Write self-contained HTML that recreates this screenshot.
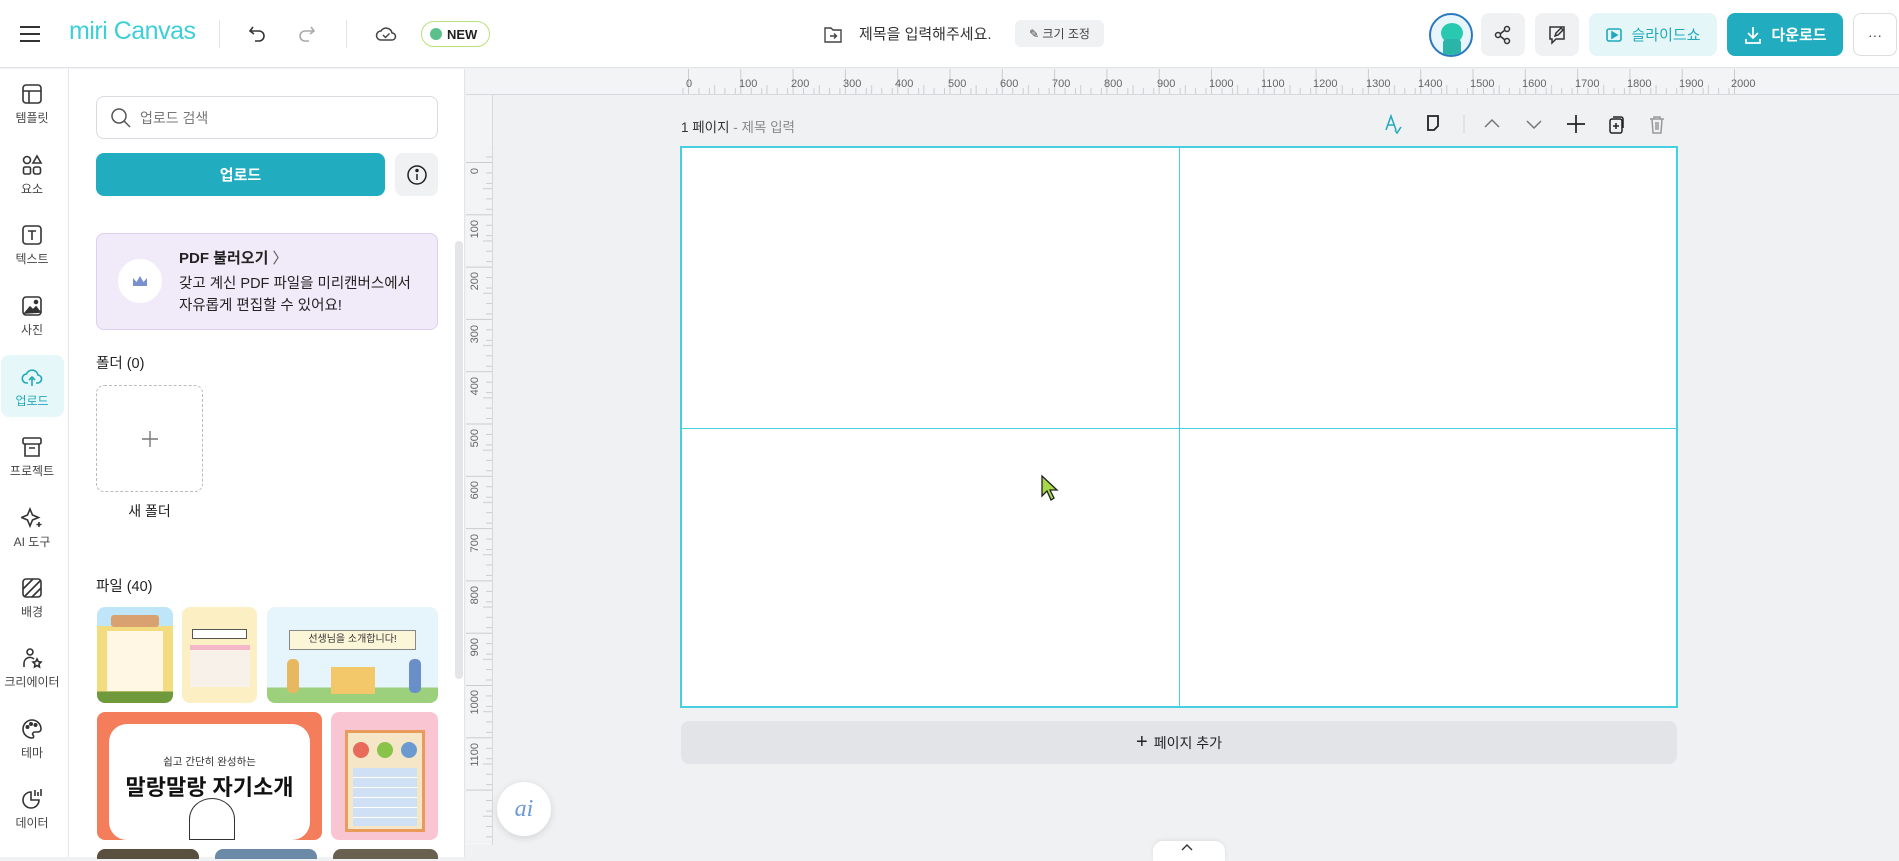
<!DOCTYPE html>
<html><head><meta charset="utf-8">
<style>
*{margin:0;padding:0;box-sizing:border-box}
body{width:1899px;height:857px;overflow:hidden;background:#f0f1f3;font-family:"Liberation Sans","Noto Sans CJK KR",sans-serif;color:#222;position:relative}
.a{position:absolute}
.top{left:0;top:0;width:1899px;height:68px;background:#fff;border-bottom:1px solid #e3e4e8}
.rail{left:0;top:69px;width:69px;height:788px;background:#fff;border-right:1px solid #e6e7ea}
.panel{left:69px;top:69px;width:396px;height:788px;background:#fff;border-right:1px solid #e3e4e8}
.ri{position:absolute;left:0;width:64px;text-align:center;font-size:12px;color:#444}
.ri svg{display:block;margin:0 auto 4px}
.btn{position:absolute;border-radius:8px;display:flex;align-items:center;justify-content:center}
</style></head><body>

<div class="a top"></div>
<svg class="a" style="left:19px;top:24px" width="22" height="20"><g stroke="#333" stroke-width="2"><line x1="1" y1="3" x2="21" y2="3"/><line x1="1" y1="10" x2="21" y2="10"/><line x1="1" y1="17" x2="21" y2="17"/></g></svg>
<div class="a" style="left:69px;top:17px;font-size:25px;color:#3ccfd8;letter-spacing:-0.5px;font-family:'Liberation Sans',sans-serif">miri Canvas</div>
<div class="a" style="left:219px;top:20px;width:1px;height:28px;background:#e3e4e8"></div>
<svg class="a" style="left:248px;top:24px" width="20" height="20" fill="none" stroke="#333" stroke-width="1.6"><path d="M5 3 L2 7 L6 10"/><path d="M2 7 H11 a5 5 0 0 1 0 10 H7"/></svg>
<svg class="a" style="left:296px;top:24px" width="20" height="20" fill="none" stroke="#aaa" stroke-width="1.6"><path d="M15 3 L18 7 L14 10"/><path d="M18 7 H9 a5 5 0 0 0 0 10 H13"/></svg>
<div class="a" style="left:346px;top:20px;width:1px;height:28px;background:#e3e4e8"></div>
<svg class="a" style="left:375px;top:25px" width="22" height="18" fill="none" stroke="#444" stroke-width="1.5"><path d="M6 15 a4.5 4.5 0 0 1 0-9 a6 6 0 0 1 11 2 a3.5 3.5 0 0 1 0 7z"/><path d="M8 10 l2.5 2.5 l4-4"/></svg>
<div class="a" style="left:421px;top:21px;width:69px;height:26px;border:1.5px solid #b8e27a;border-radius:14px;font-size:13px;font-weight:bold;display:flex;align-items:center;padding-left:8px"><span style="display:inline-block;width:12px;height:12px;border-radius:50%;background:#5cc08c;margin-right:5px"></span>NEW</div>

<svg class="a" style="left:823px;top:24px" width="20" height="20" fill="none" stroke="#444" stroke-width="1.4"><path d="M2 4 h6 l2 2 h8 v12 h-16z"/><path d="M7 12 h6 M11 9.5 l2.5 2.5 l-2.5 2.5"/></svg>
<div class="a" style="left:859px;top:23px;font-size:15px;color:#333">제목을 입력해주세요.</div>
<div class="a btn" style="left:1015px;top:20px;width:89px;height:27px;background:#f0f1f3;font-size:12px;color:#444;border-radius:6px">✎ 크기 조정</div>

<div class="a" style="left:1429px;top:13px;width:44px;height:44px;border-radius:50%;border:2px solid #2a78c0;background:#e8f6fb;overflow:hidden"><div class="a" style="left:10px;top:8px;width:22px;height:20px;border-radius:50%;background:#28c9b0"></div><div class="a" style="left:12px;top:24px;width:18px;height:20px;background:#2ab5a8;border-radius:4px"></div></div>
<div class="btn" style="left:1481px;top:13px;width:44px;height:43px;background:#f0f1f3"><svg width="20" height="20" fill="none" stroke="#333" stroke-width="1.5"><circle cx="5" cy="10" r="2.5"/><circle cx="14" cy="4" r="2.5"/><circle cx="14" cy="16" r="2.5"/><path d="M7 9 l5-4 M7 11 l5 4"/></svg></div>
<div class="btn" style="left:1535px;top:13px;width:44px;height:43px;background:#f0f1f3"><svg width="22" height="22" fill="none" stroke="#333" stroke-width="1.5"><path d="M4 3 h14 v12 h-8 l-4 4 v-4 h-2z"/><path d="M9 12 l1-3 l5-5 l2 2 l-5 5z"/></svg></div>
<div class="btn" style="left:1589px;top:13px;width:128px;height:43px;background:#e4f6f8;color:#21a9bb;font-size:15px"><svg width="18" height="18" fill="none" stroke="#21a9bb" stroke-width="1.6" style="margin-right:8px"><rect x="2" y="3" width="14" height="12" rx="2"/><path d="M7 6 l5 3 l-5 3z" fill="#21a9bb"/></svg>슬라이드쇼</div>
<div class="btn" style="left:1727px;top:13px;width:116px;height:43px;background:#21adbf;color:#fff;font-size:15px;font-weight:bold"><svg width="20" height="20" fill="none" stroke="#fff" stroke-width="1.7" style="margin-right:8px"><path d="M10 2 v11 M5 8 l5 5 l5-5 M3 14 v4 h14 v-4"/></svg>다운로드</div>
<div class="btn" style="left:1853px;top:13px;width:44px;height:43px;border:1px solid #ddd;background:#fff;font-size:14px;color:#444">···</div>

<div class="a rail">
 <div class="a" style="left:1px;top:286px;width:63px;height:62px;background:#e6f7f9;border-radius:8px"></div>
 <div class="ri" style="top:14px"><svg width="22" height="22" fill="none" stroke="#333" stroke-width="1.6"><rect x="2" y="2" width="18" height="18" rx="3"/><path d="M2 8 h18 M8 8 v12"/></svg>템플릿</div>
 <div class="ri" style="top:85px"><svg width="22" height="22" fill="none" stroke="#333" stroke-width="1.6"><circle cx="6" cy="6" r="3.5"/><path d="M16 2 l4 7 h-8z"/><rect x="2.5" y="13" width="7" height="7" rx="1.5"/><rect x="12.5" y="13" width="7" height="7" rx="2"/></svg>요소</div>
 <div class="ri" style="top:155px"><svg width="22" height="22" fill="none" stroke="#333" stroke-width="1.6"><rect x="2" y="2" width="18" height="18" rx="3"/><path d="M7 7 h8 M11 7 v9"/></svg>텍스트</div>
 <div class="ri" style="top:226px"><svg width="22" height="22" fill="none" stroke="#333" stroke-width="1.6"><rect x="2" y="2" width="18" height="18" rx="3"/><path d="M4 18 l5-6 l3 3 l3-3 l4 5z" fill="#333"/><circle cx="15" cy="7" r="1.5" fill="#333"/></svg>사진</div>
 <div class="ri" style="top:297px;color:#21a9bb"><svg width="22" height="22" fill="none" stroke="#21a9bb" stroke-width="1.6"><path d="M7 17 h-1 a4.5 4.5 0 0 1-0.5-9 a6 6 0 0 1 11.5 1 a4 4 0 0 1 -1 8 h-1"/><path d="M11 20 v-9 M8 14 l3-3 l3 3"/></svg>업로드</div>
 <div class="ri" style="top:367px"><svg width="22" height="22" fill="none" stroke="#333" stroke-width="1.6"><rect x="2" y="2" width="18" height="6" rx="1.5"/><path d="M4 8 v12 h14 v-12 M8 12 h6"/></svg>프로젝트</div>
 <div class="ri" style="top:438px"><svg width="22" height="22" fill="none" stroke="#333" stroke-width="1.6"><path d="M9 2 l2.5 6 l6 2.5 l-6 2.5 l-2.5 6 l-2.5-6 l-6-2.5 l6-2.5z"/><path d="M18 15 v5 M15.5 17.5 h5"/></svg>AI 도구</div>
 <div class="ri" style="top:508px"><svg width="22" height="22" fill="none" stroke="#333" stroke-width="1.6"><rect x="2" y="2" width="18" height="18" rx="3"/><path d="M2 12 l10-10 M4 19 l15-15 M11 20 l9-9"/></svg>배경</div>
 <div class="ri" style="top:578px"><svg width="22" height="22" fill="none" stroke="#333" stroke-width="1.6"><circle cx="9" cy="5" r="3"/><path d="M3 20 v-3 a6 6 0 0 1 10-5"/><path d="M16 12 l1.3 2.7 l2.7.4 l-2 2 l.5 2.9 l-2.5-1.4 l-2.5 1.4 l.5-2.9 l-2-2 l2.7-.4z"/></svg>크리에이터</div>
 <div class="ri" style="top:649px"><svg width="22" height="22" fill="none" stroke="#333" stroke-width="1.6"><path d="M11 2 a9 9 0 0 0 0 18 c2 0 2-2 1-3 c-1-1 0-3 2-3 h3 a3 3 0 0 0 3-3 a9 9 0 0 0 -9-9z"/><circle cx="6.5" cy="9" r="1.2" fill="#333"/><circle cx="10" cy="6" r="1.2" fill="#333"/><circle cx="14.5" cy="7" r="1.2" fill="#333"/></svg>테마</div>
 <div class="ri" style="top:719px"><svg width="22" height="22" fill="none" stroke="#333" stroke-width="1.6"><path d="M10 4 a8 8 0 1 0 8 8 h-8z"/><path d="M14 2 v6 M17 4 v4 M20 1 v7"/></svg>데이터</div>
</div>

<div class="a panel">
 <div class="a" style="left:27px;top:27px;width:342px;height:43px;border:1px solid #d9dbe0;border-radius:8px"></div>
 <svg class="a" style="left:41px;top:38px" width="22" height="22" fill="none" stroke="#555" stroke-width="1.5"><circle cx="9" cy="9" r="7"/><path d="M14 14 l6 6"/></svg>
 <div class="a" style="left:71px;top:39px;font-size:14px;color:#777">업로드 검색</div>
 <div class="btn" style="left:27px;top:84px;width:289px;height:43px;background:#21adbf;color:#fff;font-size:15px;font-weight:bold">업로드</div>
 <div class="btn" style="left:326px;top:84px;width:43px;height:43px;background:#f0f1f3"><svg width="22" height="22" fill="none" stroke="#222" stroke-width="1.5"><circle cx="11" cy="11" r="9"/><path d="M11 10 v6"/><circle cx="11" cy="6.5" r="1" fill="#222"/></svg></div>
 <div class="a" style="left:27px;top:164px;width:342px;height:97px;background:#f1eaf9;border:1px solid #dccff0;border-radius:8px"></div>
 <div class="a" style="left:49px;top:190px;width:44px;height:44px;border-radius:50%;background:#fff;display:flex;align-items:center;justify-content:center"><svg width="16" height="12"><path d="M1 3 l3.5 4 l3.5-6 l3.5 6 l3.5-4 v8 h-14z" fill="#7a8fd0"/></svg></div>
 <div class="a" style="left:110px;top:178px;font-size:15px;font-weight:bold;color:#222">PDF 불러오기 <span style="font-weight:normal;color:#555">〉</span></div>
 <div class="a" style="left:110px;top:204px;font-size:14.5px;line-height:22px;color:#222">갖고 계신 PDF 파일을 미리캔버스에서<br>자유롭게 편집할 수 있어요!</div>
 <div class="a" style="left:27px;top:283px;font-size:14.5px;color:#222">폴더 (0)</div>
 <div class="a" style="left:27px;top:316px;width:107px;height:107px;border:1px dashed #bbb;border-radius:8px"></div>
 <svg class="a" style="left:72px;top:361px" width="18" height="18" stroke="#777" stroke-width="1.4"><path d="M9 1 v16 M1 9 h16"/></svg>
 <div class="a" style="left:27px;top:432px;width:107px;text-align:center;font-size:14px;color:#222">새 폴더</div>
 <div class="a" style="left:27px;top:506px;font-size:14.5px;color:#222">파일 (40)</div>
 <div class="a" style="left:386px;top:172px;width:8px;height:438px;background:#e4e5e8;border-radius:4px"></div>

 <div class="a" style="left:28px;top:538px;width:76px;height:96px;border-radius:8px;background:linear-gradient(#bfe6f8 0 20%,#f3dc7f 20% 88%,#6f9a3c 88%);overflow:hidden"><div class="a" style="left:10px;top:24px;width:56px;height:60px;background:#fff7e3"></div><div class="a" style="left:14px;top:8px;width:48px;height:12px;background:#d9a070;border-radius:3px"></div></div>
 <div class="a" style="left:113px;top:538px;width:75px;height:96px;border-radius:8px;background:#fcefc4;overflow:hidden"><div class="a" style="left:10px;top:22px;width:55px;height:10px;border:1px solid #555;background:#fff"></div><div class="a" style="left:8px;top:38px;width:60px;height:42px;background:#f7f1ea;border-top:5px solid #f5b8c8"></div></div>
 <div class="a" style="left:198px;top:538px;width:171px;height:96px;border-radius:8px;background:linear-gradient(#e6f4fb 0 84%,#9dd07c 84%);overflow:hidden"><div class="a" style="left:22px;top:23px;width:127px;height:20px;background:#fcf6d8;border:1.5px solid #888;font-size:10px;text-align:center;line-height:17px;color:#333">선생님을 소개합니다!</div><div class="a" style="left:64px;top:60px;width:44px;height:27px;background:#f3c86a"></div><div class="a" style="left:20px;top:52px;width:12px;height:34px;background:#e8b860;border-radius:5px"></div><div class="a" style="left:142px;top:52px;width:12px;height:34px;background:#6a8fc8;border-radius:5px"></div></div>
 <div class="a" style="left:28px;top:643px;width:225px;height:128px;border-radius:8px;background:#f47e5c;overflow:hidden"><div class="a" style="left:12px;top:12px;width:201px;height:116px;background:#fff;border-radius:18px"></div><div class="a" style="left:0;top:42px;width:225px;text-align:center;font-size:10.5px;color:#333">쉽고 간단히 완성하는</div><div class="a" style="left:0;top:58px;width:225px;text-align:center;font-size:22px;font-weight:bold;color:#111">말랑말랑 자기소개</div><div class="a" style="left:92px;top:86px;width:46px;height:42px;border-radius:50% 50% 0 0;border:1.5px solid #333;background:#fff"></div></div>
 <div class="a" style="left:262px;top:643px;width:107px;height:128px;border-radius:8px;background:#f9c5d2;overflow:hidden"><div class="a" style="left:14px;top:18px;width:80px;height:102px;background:#f5e6c8;border:3px solid #e99b5c"></div><div class="a" style="left:22px;top:56px;width:64px;height:58px;background:repeating-linear-gradient(#cfe0f4 0 9px,#fff 9px 10px)"></div><div class="a" style="left:22px;top:30px;width:16px;height:16px;border-radius:50%;background:#e86a5a"></div><div class="a" style="left:46px;top:30px;width:16px;height:16px;border-radius:50%;background:#8ac34a"></div><div class="a" style="left:70px;top:30px;width:16px;height:16px;border-radius:50%;background:#6a9ad0"></div></div>
 <div class="a" style="left:28px;top:780px;width:102px;height:10px;border-radius:8px 8px 0 0;background:#5a5040"></div>
 <div class="a" style="left:146px;top:780px;width:102px;height:10px;border-radius:8px 8px 0 0;background:#6a8aa8"></div>
 <div class="a" style="left:264px;top:780px;width:105px;height:10px;border-radius:8px 8px 0 0;background:#6a6050"></div>
</div>

<svg class="a" style="left:0;top:0" width="1899" height="857">
 <defs>
  <pattern id="hx" x="688" y="0" width="52.3" height="94" patternUnits="userSpaceOnUse">
   <line x1="0.5" y1="69" x2="0.5" y2="94" stroke="#ccc"/>
   <line x1="10.96" y1="88" x2="10.96" y2="94" stroke="#ccc"/><line x1="21.42" y1="88" x2="21.42" y2="94" stroke="#ccc"/><line x1="26.65" y1="85" x2="26.65" y2="94" stroke="#ccc"/><line x1="36.9" y1="88" x2="36.9" y2="94" stroke="#ccc"/><line x1="47.3" y1="88" x2="47.3" y2="94" stroke="#ccc"/>
  </pattern>
  <pattern id="vy" x="0" y="162" width="492" height="52.3" patternUnits="userSpaceOnUse">
   <line x1="465" y1="0.5" x2="492" y2="0.5" stroke="#ccc"/>
   <line x1="486" y1="10.96" x2="492" y2="10.96" stroke="#ccc"/><line x1="486" y1="21.42" x2="492" y2="21.42" stroke="#ccc"/><line x1="483" y1="26.65" x2="492" y2="26.65" stroke="#ccc"/><line x1="486" y1="36.9" x2="492" y2="36.9" stroke="#ccc"/><line x1="486" y1="47.3" x2="492" y2="47.3" stroke="#ccc"/>
  </pattern>
 </defs>
 <rect x="466" y="69" width="1433" height="25" fill="#f3f4f6"/>
 <rect x="677" y="69" width="1064" height="25" fill="url(#hx)"/>
 <line x1="466" y1="94.5" x2="1899" y2="94.5" stroke="#d6d8dc"/>
 <rect x="466" y="95" width="26" height="750" fill="#f3f4f6"/>
 <rect x="466" y="147" width="26" height="695" fill="url(#vy)"/>
 <line x1="492.5" y1="95" x2="492.5" y2="845" stroke="#d6d8dc"/>
 <g font-size="11" fill="#666" font-family="Liberation Sans,sans-serif">
  <text x="686" y="87">0</text><text x="739" y="87">100</text><text x="791" y="87">200</text><text x="843" y="87">300</text><text x="895" y="87">400</text><text x="948" y="87">500</text><text x="1000" y="87">600</text><text x="1052" y="87">700</text><text x="1104" y="87">800</text><text x="1157" y="87">900</text><text x="1209" y="87">1000</text><text x="1261" y="87">1100</text><text x="1313" y="87">1200</text><text x="1366" y="87">1300</text><text x="1418" y="87">1400</text><text x="1470" y="87">1500</text><text x="1522" y="87">1600</text><text x="1575" y="87">1700</text><text x="1627" y="87">1800</text><text x="1679" y="87">1900</text><text x="1731" y="87">2000</text>
 </g>
 <g font-size="11" fill="#666" font-family="Liberation Sans,sans-serif">
  <text transform="translate(478,168) rotate(-90)" text-anchor="end">0</text>
  <text transform="translate(478,220) rotate(-90)" text-anchor="end">100</text>
  <text transform="translate(478,272) rotate(-90)" text-anchor="end">200</text>
  <text transform="translate(478,325) rotate(-90)" text-anchor="end">300</text>
  <text transform="translate(478,377) rotate(-90)" text-anchor="end">400</text>
  <text transform="translate(478,429) rotate(-90)" text-anchor="end">500</text>
  <text transform="translate(478,481) rotate(-90)" text-anchor="end">600</text>
  <text transform="translate(478,534) rotate(-90)" text-anchor="end">700</text>
  <text transform="translate(478,586) rotate(-90)" text-anchor="end">800</text>
  <text transform="translate(478,638) rotate(-90)" text-anchor="end">900</text>
  <text transform="translate(478,690) rotate(-90)" text-anchor="end">1000</text>
  <text transform="translate(478,743) rotate(-90)" text-anchor="end">1100</text>
 </g>
</svg>

<div class="a" style="left:681px;top:116px;font-size:13.5px;color:#333">1 페이지 <span style="color:#888">- 제목 입력</span></div>
<svg class="a" style="left:1382px;top:112px" width="300" height="24" fill="none" stroke-width="1.5">
 <path d="M4 18 L9 4 L14 18 M6 13 h6" stroke="#21a9bb"/><path d="M13 18 l2 3 l4-6" stroke="#21a9bb"/>
 <path d="M46 4 h10 v10 l-4 4 h-6z" stroke="#222" stroke-width="1.8"/>
 <line x1="82" y1="3" x2="82" y2="21" stroke="#ddd"/>
 <path d="M103 15 l7-7 l7 7" stroke="#777"/><path d="M145 9 l7 7 l7-7" stroke="#777"/>
 <path d="M194 3 v18 M185 12 h18" stroke="#222" stroke-width="1.7"/>
 <rect x="228" y="7" width="12" height="14" rx="2" stroke="#222"/><path d="M231 5 h8 a2 2 0 0 1 2 2 v9" stroke="#222"/><path d="M234 11 v6 M231 14 h6" stroke="#222"/>
 <path d="M268 7 h14 M272 7 v-2 h6 v2 M270 7 l1 14 h8 l1-14 M274 10 v8 M276 10 v8" stroke="#999"/>
</svg>
<div class="a" style="left:680px;top:146px;width:998px;height:562px;background:#fff;border:2px solid #45cfe0"></div>
<div class="a" style="left:1179px;top:148px;width:1px;height:558px;background:#45cfe0"></div>
<div class="a" style="left:682px;top:428px;width:994px;height:1px;background:#45cfe0"></div>
<div class="btn" style="left:681px;top:721px;width:996px;height:43px;background:#e3e4e7;font-size:14px;color:#222"><span style="font-size:20px;margin-right:6px">+</span>페이지 추가</div>

<svg class="a" style="left:1040px;top:474px" width="24" height="30"><path d="M2 2 L2 22 L7 17 L11 26 L14 24 L10 16 L17 16 Z" fill="#a6d84a" stroke="#222" stroke-width="1.3"/></svg>

<div class="a" style="left:497px;top:782px;width:54px;height:54px;border-radius:50%;background:#fff;box-shadow:0 2px 8px rgba(0,0,0,.12);display:flex;align-items:center;justify-content:center;font-size:24px;font-style:italic;font-family:'Liberation Serif',serif;color:#6a9ad8">ai</div>
<div class="a" style="left:1153px;top:841px;width:72px;height:20px;background:#fff;border-radius:10px 10px 0 0;box-shadow:0 -1px 4px rgba(0,0,0,.08)"></div>
<svg class="a" style="left:1180px;top:843px" width="14" height="10" fill="none" stroke="#333" stroke-width="1.4"><path d="M2 7 l5-5 l5 5"/></svg>
</body></html>
